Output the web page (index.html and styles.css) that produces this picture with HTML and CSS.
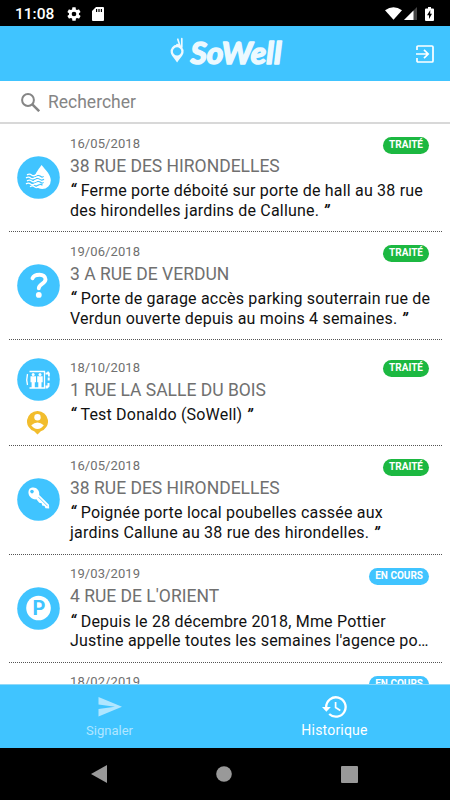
FILE: index.html
```html
<!DOCTYPE html>
<html lang="fr">
<head>
  <meta charset="UTF-8">
  <meta name="viewport" content="width=device-width, initial-scale=1">
  <title>SoWell - Historique</title>
  <link rel="stylesheet" href="styles.css">
</head>
<body>

  <div class="status-bar">
    <span class="clock">11:08</span>
    <svg class="gear" width="16" height="16" viewBox="0 0 24 24"><path d="M19.4 13a7.500 7.500 0 0 0 0-2l2.100-1.600c.2-.2.300-.4.100-.7l-2-3.400c-.1-.2-.4-.3-.6-.2l-2.500 1a7 7 0 0 0-1.700-1L14.500 2.400a.5.500 0 0 0-.5-.4h-4a.5.500 0 0 0-.5.400L9.100 5.100a7 7 0 0 0-1.700 1l-2.500-1c-.2-.1-.5 0-.6.200l-2 3.400c-.1.200-.1.500.1.700L4.500 11a7.500 7.500 0 0 0 0 2l-2.100 1.600c-.2.200-.2.500-.1.700l2 3.400c.1.200.4.300.6.200l2.500-1a7 7 0 0 0 1.700 1l.4 2.700c0 .2.200.4.500.4h4c.3 0 .5-.2.500-.4l.4-2.700a7 7 0 0 0 1.700-1l2.500 1c.2.100.5 0 .6-.2l2-3.400c.1-.2.100-.5-.1-.7zM12 15.500a3.500 3.500 0 1 1 0-7 3.500 3.500 0 0 1 0 7z" fill-rule="evenodd"/></svg>
    <svg class="sd" width="12" height="14" viewBox="0 0 12 14"><path d="M4 0h7q1 0 1 1v12q0 1-1 1H1q-1 0-1-1V4z"/><path d="M4 2h1.200v3H4zM6.400 2h1.200v3H6.400zM8.800 2H10v3H8.800z" fill="#000"/></svg>
    <svg class="wifi" width="17" height="13" viewBox="0 0 18 13"><path d="M0 3Q9-3 18 3L9 13z"/></svg>
    <svg class="signal" width="13" height="13" viewBox="0 0 13 13"><path d="M13 0v13H0z" fill="#444"/><path d="M9.500 3.500V13H0z"/></svg>
    <svg class="battery" width="9" height="14" viewBox="0 0 9 14"><path d="M3 0h3v1.500h2q1 0 1 1V13q0 1-1 1H1q-1 0-1-1V2.500q0-1 1-1h2z"/><path d="M5.300 3L2 8.300h2V12l3-5.300H5.200z" fill="#000"/></svg>
  </div>

  <header class="header">
    <svg class="logo" width="122" height="40" viewBox="0 0 122 40">
      <path d="M1.700 19.500a6.500 6.500 0 1 1 12.800 0c-.5 3.300-3.500 5.600-6.400 10-2.800-4.400-5.800-6.700-6.400-10zm2.200-1.100a4.200 4.200 0 1 0 8.400 0 4.200 4.200 0 0 0-8.400 0z" fill-rule="evenodd"/>
      <path d="M11.500 14.500L8.800 6.200M12.800 14V5.700M8 11.500l3 1" fill="none" stroke="#ecf9ff" stroke-width="1.700" stroke-linecap="round"/>
      <text class="logo-text" x="21.500" y="31" textLength="91" lengthAdjust="spacingAndGlyphs">SoWell</text>
    </svg>
    <svg class="logout" width="18" height="18" viewBox="0 0 18 18"><path d="M1 5V2q0-1 1-1h14q1 0 1 1v14q0 1-1 1H2q-1 0-1-1v-3M0 9h12M8 4.800L12.200 9 8 13.200" fill="none" stroke="#fff" stroke-width="1.700"/></svg>
  </header>

  <div class="search">
    <svg width="19" height="19" viewBox="0 0 19 19" fill="none" stroke="#858585" stroke-width="2"><circle cx="7" cy="7" r="5.900"/><path d="M11.300 11.300l6.900 6.900" stroke-width="2.500"/></svg>
    <span>Rechercher</span>
  </div>

  <main class="list">
    <article class="item">
      <div class="icons">
        <svg width="43" height="43" viewBox="0 0 43 43">
          <circle cx="21.500" cy="21.500" r="21.300" fill="#40c4ff"/>
          <path d="M24.500 9c4 5 9.300 9.500 9.300 15.300A8.600 8.600 0 0 1 25.200 33c-5 0-8.300-4-8.300-8.700C16.900 19 21 14 24.500 9z" fill="#fff"/>
          <path d="M10 20.300q2.500-1.700 4.500 0t4.500 0 4.500 0 3 0M9 23.300q2.500-1.700 4.500 0t4.500 0 4.500 0 4.500 0M10 26.300q2.500-1.700 4.500 0t4.500 0 4.500 0 3 0M12 29.300q2.500-1.700 4.500 0t4.500 0 4.500 0" fill="none" stroke="#40c4ff" stroke-width="1.200"/>
          <path d="M10 18.900q2.500-1.700 4.500 0t4.500 0 4.500 0M9 21.900q2.500-1.700 4.500 0t4.500 0 4.500 0M10 24.900q2.500-1.700 4.500 0t4.500 0 4.500 0M9 27.900q2.500-1.700 4.500 0t4.500 0 4.500 0M13 30.700q2.500-1.700 4.500 0t4.500 0" fill="none" stroke="#fff" stroke-width="1.300"/>
        </svg>
      </div>
      <div class="content">
        <div class="date">16/05/2018</div>
        <h2 class="address">38 RUE DES HIRONDELLES</h2>
        <p class="desc"><b>“</b> Ferme porte déboité sur porte de hall au 38 rue<br>des hirondelles jardins de Callune. <b>”</b></p>
      </div>
      <span class="badge done">TRAITÉ</span>
    </article>

    <article class="item">
      <div class="icons">
        <svg width="43" height="43" viewBox="0 0 43 43">
          <circle cx="21.500" cy="21.500" r="21.300" fill="#40c4ff"/>
          <path d="M15.500 14.200c1.800-4.500 13-5.200 13 1.100 0 4.700-6.700 4.500-6.700 9" fill="none" stroke="#fff" stroke-width="3.900" stroke-linecap="round"/>
          <circle cx="21.800" cy="30.900" r="2.900" fill="#fff"/>
        </svg>
      </div>
      <div class="content">
        <div class="date">19/06/2018</div>
        <h2 class="address">3 A RUE DE VERDUN</h2>
        <p class="desc"><b>“</b> Porte de garage accès parking souterrain rue de<br>Verdun ouverte depuis au moins 4 semaines. <b>”</b></p>
      </div>
      <span class="badge done">TRAITÉ</span>
    </article>

    <article class="item item-short">
      <div class="icons">
        <svg width="43" height="43" viewBox="0 0 43 43">
          <circle cx="21.500" cy="21.500" r="21.300" fill="#40c4ff"/>
          <path d="M12.500 13.500h15v16.500h-15M10.500 16q-1.500 6 0 11" fill="none" stroke="#fff" stroke-width="1.300"/>
          <g fill="#fff">
            <circle cx="16.200" cy="16.500" r="1.500"/><circle cx="23" cy="16.500" r="1.500"/>
            <path d="M13.500 18.300h5.500v6h-1.200V30h-3.200v-5.700h-1.100zM20.200 18.300h5.500v6h-1.200V30h-3.200v-5.700h-1.100z"/>
            <path d="M28.500 14.500h1.500l1-1.500 1.800 2v3.500H31V16.500h-2.500zM30.700 19.500h2v3h-2zM28.500 27.500h2V25h2v3.500l-2 2h-2z"/>
          </g>
        </svg>
        <svg class="person" width="21" height="24" viewBox="0 0 21 24">
          <path d="M10.500 0a10.400 10.400 0 0 1 3.300 20.300L10.500 23.500l-3.300-3.200A10.400 10.400 0 0 1 10.500 0z" fill="#f2bd2d"/>
          <circle cx="10.500" cy="6.300" r="3.200" fill="#fff"/>
          <path d="M4.200 14.200q6.300-5.200 12.600 0-2.500 3.700-6.300 3.700t-6.300-3.700z" fill="#fff"/>
        </svg>
      </div>
      <div class="content">
        <div class="date">18/10/2018</div>
        <h2 class="address">1 RUE LA SALLE DU BOIS</h2>
        <p class="desc"><b>“</b> Test Donaldo (SoWell) <b>”</b></p>
      </div>
      <span class="badge done">TRAITÉ</span>
    </article>

    <article class="item">
      <div class="icons">
        <svg width="43" height="43" viewBox="0 0 43 43">
          <circle cx="21.500" cy="21.500" r="21.300" fill="#40c4ff"/>
          <path d="M12.500 10.800c4.500-3.600 10.700.2 9.700 6.200L32 26.800l.2 3.700-3.700-.3-1-2.300-2.400-.3-.4-2.400-2.500-.4-2.800-3.500c-6 1-10-6-6.900-10.500zm1.200 1.500a1.800 1.800 0 1 0 2.600 2.500 1.800 1.800 0 0 0-2.600-2.500z" fill="#fff" fill-rule="evenodd"/>
          <path d="M21.500 19.200l9 9" stroke="#40c4ff" stroke-width=".8"/>
        </svg>
      </div>
      <div class="content">
        <div class="date">16/05/2018</div>
        <h2 class="address">38 RUE DES HIRONDELLES</h2>
        <p class="desc"><b>“</b> Poignée porte local poubelles cassée aux<br>jardins Callune au 38 rue des hirondelles. <b>”</b></p>
      </div>
      <span class="badge done">TRAITÉ</span>
    </article>

    <article class="item">
      <div class="icons">
        <svg width="43" height="43" viewBox="0 0 43 43">
          <circle cx="21.500" cy="21.500" r="21.300" fill="#40c4ff"/>
          <circle cx="21.500" cy="21" r="12.300" fill="#fff"/>
          <text class="parking" x="22" y="28" text-anchor="middle">P</text>
        </svg>
      </div>
      <div class="content">
        <div class="date">19/03/2019</div>
        <h2 class="address">4 RUE DE L'ORIENT</h2>
        <p class="desc"><b>“</b> Depuis le 28 décembre 2018, Mme Pottier<br>Justine appelle toutes les semaines l'agence po…</p>
      </div>
      <span class="badge pending">EN COURS</span>
    </article>

    <article class="item">
      <div class="icons"></div>
      <div class="content">
        <div class="date">18/02/2019</div>
      </div>
      <span class="badge pending">EN COURS</span>
    </article>
  </main>

  <nav class="tabs">
    <a class="tab">
      <svg width="24" height="21" viewBox="0 0 24 21"><path d="M.5.500L24 10.200.5 20v-7.600l16.500-2.200L.5 8z"/></svg>
      <span>Signaler</span>
    </a>
    <a class="tab active">
      <svg width="26" height="22" viewBox="0 0 26 22"><path d="M4.200 12V11a9.700 9.700 0 1 1 3 7" fill="none" stroke="#fff" stroke-width="2.300"/><path d="M0 11h8.800l-4.400 4.700z"/><path d="M13.600 6v5.500l4.700 3" fill="none" stroke="#fff" stroke-width="1.700"/></svg>
      <span>Historique</span>
    </a>
  </nav>

  <div class="nav-bar">
    <svg width="16" height="18" viewBox="0 0 16 18"><path d="M16 0v18L0 9z"/></svg>
    <svg width="16" height="16" viewBox="0 0 16 16"><circle cx="8" cy="8" r="7.800"/></svg>
    <svg width="17" height="17" viewBox="0 0 17 17"><rect width="17" height="17" rx="1"/></svg>
  </div>

</body>
</html>
```
FILE: styles.css
```css
* {
  box-sizing: border-box;
}
body {
  margin: 0;
  width: 450px;
  height: 800px;
  display: flex;
  flex-direction: column;
  overflow: hidden;
  font-family: Roboto, sans-serif;
  background-color: #fff;
}
svg {
  display: block;
  flex-shrink: 0;
}

.status-bar {
  height: 26px;
  flex-shrink: 0;
  display: flex;
  align-items: center;
  padding: 1px 16px 0 15px;
  background-color: #000;
  color: #fff;
}
.status-bar svg {
  fill: #fff;
}
.clock {
  width: 51px;
  font-size: 15.5px;
  font-weight: 500;
}
.sd {
  margin-left: 10px;
}
.wifi {
  margin-left: auto;
}
.signal {
  margin: 0 8px 0 2px;
}

.header {
  height: 55px;
  flex-shrink: 0;
  display: flex;
  align-items: center;
  padding: 0 16px 0 169px;
  background-color: #40c4ff;
}
.logo {
  fill: #ecf9ff;
  margin-top: -2px;
}
.logo-text {
  font-family: Lato, sans-serif;
  font-size: 31px;
  font-weight: 700;
  font-style: italic;
  stroke: #ecf9ff;
  stroke-width: 1.6px;
  stroke-linejoin: round;
}
.logout {
  margin-left: auto;
}

.search {
  height: 43px;
  flex-shrink: 0;
  display: flex;
  align-items: center;
  gap: 8px;
  padding: 1px 0 0 21px;
  border-bottom: 2px solid #d8d8d8;
  color: #858585;
  font-size: 17.5px;
}

.list {
  flex: 1;
  min-height: 0;
  overflow: hidden;
  padding: 0 8px 0 9px;
}
.item {
  height: 108.2px;
  display: flex;
  align-items: flex-start;
  position: relative;
  border-bottom: 1px dotted #555;
}
.item-short {
  height: 106px;
}
.icons {
  width: 61px;
  flex-shrink: 0;
  padding: 32px 0 0 8px;
}
.item-short .icons {
  padding-top: 18px;
}
.person {
  margin: 10px 0 0 10px;
}
.content {
  padding-top: 11.5px;
  white-space: nowrap;
}
.item-short .content {
  padding-top: 19.5px;
}
.date {
  font-size: 13px;
  line-height: 16px;
  letter-spacing: .1px;
  color: #707070;
}
.address {
  margin: 3px 0 4.5px;
  font-size: 17.5px;
  font-weight: 400;
  line-height: 22px;
  font-kerning: none;
  color: #707070;
}
.desc {
  margin: 0;
  font-size: 16px;
  line-height: 19.5px;
  letter-spacing: .2px;
  color: #111;
}
.desc b {
  font-style: italic;
}
.badge {
  position: absolute;
  top: 13px;
  right: 13px;
  height: 17px;
  padding: 0 6px;
  border-radius: 9px;
  color: #fff;
  font-size: 10px;
  font-weight: 700;
  line-height: 15px;
}
.item-short .badge {
  top: 20px;
}
.done {
  background-color: #1cb841;
}
.pending {
  background-color: #40c4ff;
}
.parking {
  font-size: 20px;
  font-weight: 700;
  fill: #40c4ff;
}

.tabs {
  height: 64px;
  flex-shrink: 0;
  display: flex;
  padding-right: 6px;
  border-top: 1px solid #91d9f8;
  background-color: #40c4ff;
}
.tab {
  flex: 1;
  display: flex;
  flex-direction: column;
  align-items: center;
  padding-top: 11px;
  color: #b0e6ff;
  font-size: 13px;
}
.tab:first-child {
  padding-right: 3px;
}
.tab svg {
  height: 22px;
  fill: #b0e6ff;
}
.tab span {
  margin-top: 4px;
  line-height: 17px;
}
.tab.active {
  padding-left: 3px;
  color: #fff;
  font-size: 14px;
  letter-spacing: .2px;
}
.tab.active svg {
  fill: #fff;
}

.nav-bar {
  height: 52px;
  flex-shrink: 0;
  display: flex;
  align-items: center;
  justify-content: space-between;
  padding: 0 92px 0 91px;
  background-color: #000;
}
.nav-bar svg {
  fill: #999;
}
```
